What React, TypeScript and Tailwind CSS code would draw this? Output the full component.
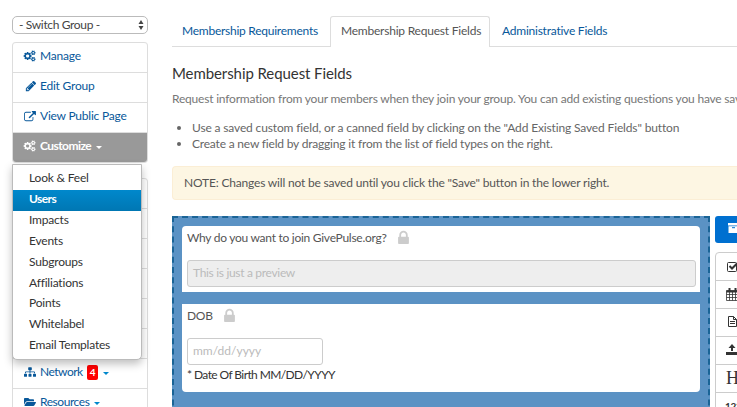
import React, { FC, ReactNode } from 'react';
import clsx from 'clsx';
import { FaSitemap, FaFolderOpen } from 'react-icons/fa';

interface IGlyph {
  name: keyof typeof glyphs;
  className?: string;
}

const glyphs = {
  cogs: {
    box: '0 0 1920 1792',
    d: 'M832 896q0-106-75-181t-181-75-181 75-75 181 75 181 181 75 181-75 75-181zm768 512q0-52-38-90t-90-38-90 38-38 90q0 53 37.5 90.5t90.5 37.5 90.5-37.5 37.5-90.5zm0-1024q0-52-38-90t-90-38-90 38-38 90q0 53 37.5 90.5t90.5 37.5 90.5-37.5 37.5-90.5zm-384 421v185q0 10-7 19.5t-16 10.5l-155 24q-11 35-32 76 34 48 90 115 7 11 7 20 0 12-7 19-23 30-82.5 89.5t-78.5 59.5q-11 0-21-7l-115-90q-37 19-77 31-11 108-23 155-7 24-30 24h-186q-11 0-20-7.5t-10-17.5l-23-153q-34-10-75-31l-118 89q-7 7-20 7-11 0-21-8-144-133-144-160 0-9 7-19 10-14 41-53t47-61q-23-44-35-82l-152-24q-10-1-17-9.5t-7-19.5v-185q0-10 7-19.5t16-10.5l155-24q11-35 32-76-34-48-90-115-7-11-7-20 0-12 7-20 22-30 82-89t79-59q11 0 21 7l115 90q34-18 77-32 11-108 23-154 7-24 30-24h186q11 0 20 7.5t10 17.5l23 153q34 10 75 31l118-89q8-7 20-7 11 0 21 8 144 133 144 160 0 8-7 19-12 16-42 54t-45 60q23 48 34 82l152 23q10 2 17 10.5t7 19.5zm640 533v140q0 16-149 31-12 27-30 52 51 113 51 138 0 4-4 7-122 71-124 71-8 0-46-47t-52-68q-20 2-30 2t-30-2q-14 21-52 68t-46 47q-2 0-124-71-4-3-4-7 0-25 51-138-18-25-30-52-149-15-149-31v-140q0-16 149-31 13-29 30-52-51-113-51-138 0-4 4-7 4-2 35-20t59-34 30-16q8 0 46 46.5t52 67.5q20-2 30-2t30 2q51-71 92-112l6-2q4 0 124 70 4 3 4 7 0 25-51 138 17 23 30 52 149 15 149 31zm0-1024v140q0 16-149 31-12 27-30 52 51 113 51 138 0 4-4 7-122 71-124 71-8 0-46-47t-52-68q-20 2-30 2t-30-2q-14 21-52 68t-46 47q-2 0-124-71-4-3-4-7 0-25 51-138-18-25-30-52-149-15-149-31v-140q0-16 149-31 13-29 30-52-51-113-51-138 0-4 4-7 4-2 35-20t59-34 30-16q8 0 46 46.5t52 67.5q20-2 30-2t30 2q51-71 92-112l6-2q4 0 124 70 4 3 4 7 0 25-51 138 17 23 30 52 149 15 149 31z',
  },
  pencil: {
    box: '0 0 1792 1792',
    d: 'M491 1536l91-91-235-235-91 91v107h128v128h107zm523-928q0-22-22-22-10 0-17 7l-542 542q-7 7-7 17 0 22 22 22 10 0 17-7l542-542q7-7 7-17zm-54-192l416 416-832 832h-416v-416zm683 96q0 53-37 90l-166 166-416-416 166-165q36-38 90-38 53 0 91 38l235 234q37 39 37 91z',
  },
  external: {
    box: '0 0 1792 1664',
    d: 'M1408 928v320q0 119-84.5 203.5t-203.5 84.5h-832q-119 0-203.5-84.5t-84.5-203.5v-832q0-119 84.5-203.5t203.5-84.5h704q14 0 23 9t9 23v64q0 14-9 23t-23 9h-704q-66 0-113 47t-47 113v832q0 66 47 113t113 47h832q66 0 113-47t47-113v-320q0-14 9-23t23-9h64q14 0 23 9t9 23zm384-864v512q0 26-19 45t-45 19-45-19l-176-176-652 652q-10 10-23 10t-23-10l-114-114q-10-10-10-23t10-23l652-652-176-176q-19-19-19-45t19-45 45-19h512q26 0 45 19t19 45z',
  },
  lock: {
    box: '0 256 1152 1280',
    d: 'M320 768h512v-192q0-106-75-181t-181-75-181 75-75 181v192zm832 96v576q0 40-28 68t-68 28h-960q-40 0-68-28t-28-68v-576q0-40 28-68t68-28h32v-192q0-184 132-316t316-132 316 132 132 316v192h32q40 0 68 28t28 68z',
  },
};

const Glyph: FC<IGlyph> = ({ name, className }) => (
  <svg viewBox={glyphs[name].box} className={clsx('shrink-0 fill-current overflow-visible', className)}>
    <path d={glyphs[name].d} />
  </svg>
);

const Caret: FC<{ className?: string }> = ({ className }) => (
  <span className={clsx('border-x-[3px] border-t-[3px] border-x-transparent border-t-current', className)} />
);

const tabs = [
  { title: 'Membership Requirements', style: 'w-[158px] pl-[10px] tracking-[-0.25px]' },
  { title: 'Membership Request Fields', style: 'w-[160px] pl-[10px] tracking-[-0.22px]', active: true },
  { title: 'Administrative Fields', style: 'pl-[12px] tracking-[-0.23px]' },
];

const menu = [
  { title: 'Look & Feel' },
  { title: 'Users', active: true },
  { title: 'Impacts' },
  { title: 'Events' },
  { title: 'Subgroups' },
  { title: 'Affiliations' },
  { title: 'Points' },
  { title: 'Whitelabel' },
  { title: 'Email Templates' },
];

const NavRow: FC<{ icon?: ReactNode; children?: ReactNode }> = ({ icon, children }) => (
  <li className="flex h-[30px] items-center border-t border-[#ddd] pb-[3px] pl-[11px] tracking-[-0.22px] first:rounded-t-[3px]">
    <span className="flex w-4 items-center">{icon}</span>
    {children}
  </li>
);

const Sidebar = () => (
  <aside className="relative ml-3 w-[136px] shrink-0 pt-4 text-[#08589a]">
    <div className="flex h-[18px] items-center justify-between rounded-[5px] border border-[#bbb] pr-[3px] pl-[6px] tracking-[-0.35px] text-[#444]">
      <span className="pb-px">- Switch Group -</span>
      <svg viewBox="0 0 6 10" className="h-[10px] w-[6px] fill-[#444]">
        <path d="M3 0L5.5 4H.5zM3 10L.5 6h5z" />
      </svg>
    </div>

    <ul className="mt-2 rounded-[4px] border-x border-b border-[#ddd]">
      <NavRow icon={<Glyph name="cogs" className="h-[12px] w-[12px]" />}>Manage</NavRow>
      <NavRow icon={<Glyph name="pencil" className="ml-px h-[12px] w-[12px]" />}>Edit Group</NavRow>
      <NavRow icon={<Glyph name="external" className="h-[11px] w-[12px]" />}>View Public Page</NavRow>
      <li className="flex h-[30px] items-center rounded-b-[3px] border-t border-[#ddd] bg-[#999] pb-[3px] pl-[11px] font-bold tracking-[-0.55px] text-white">
        <span className="flex w-4 items-center">
          <Glyph name="cogs" className="h-[12px] w-[12px]" />
        </span>
        Customize
        <Caret className="mt-[3px] ml-[5px]" />
      </li>
    </ul>

    <ul className="mt-[15px] rounded-t-[4px] border-x border-[#ddd]">
      {[1, 2, 3, 4, 5, 6].map((row) => (
        <NavRow key={row} />
      ))}
      <NavRow icon={<FaSitemap className="h-[10px] w-[12px]" />}>
        <span className="w-[42px] tracking-[-0.5px]">Network</span>
        <span className="ml-[5px] flex h-[15px] w-[11px] items-center justify-center rounded-[2px] bg-[#f00] text-[10px] font-bold text-white">4</span>
        <Caret className="mt-[3px] ml-[5px] text-[#0088cc]" />
      </NavRow>
      <NavRow icon={<FaFolderOpen className="h-[12px] w-[12px]" />}>
        <span className="tracking-[-0.45px]">Resources</span>
        <Caret className="mt-[3px] ml-[5px] text-[#0088cc]" />
      </NavRow>
    </ul>

    <ul className="absolute top-[164px] left-0 h-[196px] w-[130px] rounded-b-[5px] border border-[#bbb] bg-white pt-[4px] tracking-[-0.2px] text-[#333] shadow-[0_4px_9px_rgba(0,0,0,0.25)]">
      {menu.map((item) => (
        <li
          key={item.title}
          className={clsx(
            'flex h-[20.85px] items-center pb-[2px] pl-4',
            item.active && 'bg-gradient-to-b from-[#0088cc] to-[#0077b3] font-bold tracking-[-0.6px] text-white'
          )}
        >
          {item.title}
        </li>
      ))}
    </ul>
  </aside>
);

const Field: FC<{ label: string; className?: string; children: ReactNode }> = ({ label, className, children }) => (
  <div className={clsx('bg-white pl-[5px] text-[#555]', className)}>
    <div className="flex h-[23px] items-center tracking-[-0.27px]">
      <span>{label}</span>
      <Glyph name="lock" className="ml-[11px] h-[12px] w-[11px] text-[#ccc]" />
    </div>
    {children}
  </div>
);

const Palette = () => (
  <div className="ml-[5px] w-[60px] shrink-0 text-[#333]">
    <div className="flex h-[27px] items-center rounded-[3px] bg-[#0070d0] pb-[3px] pl-[13px]">
      <svg viewBox="0 0 14 11" className="h-[11px] w-[14px]">
        <path d="M0 0H14V2.500H0zM.5 3.200H13.500V10H.5z" fill="#fff" />
        <path d="M4 4.700H7" stroke="#0070d0" />
      </svg>
    </div>
    <div className="mt-[9px] rounded-[4px] border border-[#ccc]">
      <div className="flex h-[27px] items-center pl-[11px]">
        <svg viewBox="0 0 11 11" className="size-[11px]" fill="none" stroke="currentColor">
          <rect x=".5" y="1.500" width="9" height="9" rx="1" />
          <path d="M2.500 5L5 7.500L10 2.500" strokeWidth="2" />
        </svg>
      </div>
      <div className="flex h-7 items-center border-t border-[#ccc] pb-px pl-[10px]">
        <svg viewBox="0 0 13 13" className="size-[13px]" fill="none" stroke="currentColor">
          <path d="M.5 2.500H12.500V12.500H.5zM.5 6.500H12.500M.5 9.500H12.500M3.500 4V12.500M6.500 4V12.500M9.500 4V12.500" strokeWidth=".8" />
          <path d="M.5 3.500H12.500" strokeWidth="2" />
          <path d="M3.500 0V3M9.500 0V3" strokeWidth="2" />
        </svg>
      </div>
      <div className="flex h-7 items-center border-t border-[#ccc] pb-[2px] pl-[12px]">
        <svg viewBox="0 0 9 11" className="h-[11px] w-[9px]" fill="none" stroke="currentColor">
          <path d="M.5 .5H5.500L8.500 3.500V10.500H.5zM5.500 .5V3.500H8.500M2 5.500H7M2 7.500H7" />
        </svg>
      </div>
      <div className="flex h-7 items-center border-t border-[#ccc] pb-px pl-[10px]">
        <svg viewBox="0 0 12 12" className="size-3 fill-current">
          <path d="M6 0L9.500 4H7V7H5V4H2.500zM0 8H12V11H0z" />
        </svg>
      </div>
      <div className="flex h-7 items-center border-t border-[#ccc] pb-[2px] pl-[10px] font-['Liberation_Serif',serif] text-[18px]">H</div>
      <div className="flex h-7 items-center border-t border-[#ccc] pb-[2px] pl-[9px] text-[10px] font-bold tracking-[-0.3px]">123</div>
    </div>
  </div>
);

const App: FC = () => (
  <div className="flex h-[407px] w-[737px] overflow-hidden bg-white font-[Lato,sans-serif] text-[12px] leading-[16px] whitespace-nowrap">
    <Sidebar />

    <main className="ml-6 w-[565px] shrink-0 pt-4">
      <nav className="flex h-[31px] border-b border-[#ddd] text-[#08589a]">
        {tabs.map((tab) => (
          <div
            key={tab.title}
            className={clsx(
              'flex items-center',
              tab.style,
              tab.active ? 'h-[31px] rounded-t-[3px] border border-b-0 border-[#ddd] bg-white pb-[3px] text-[#555]' : 'h-[30px] pb-px'
            )}
          >
            {tab.title}
          </div>
        ))}
      </nav>

      <h1 className="mt-[16px] text-[15px] leading-5 tracking-[-0.08px] text-[#333]">Membership Request Fields</h1>
      <p className="mt-[8px] tracking-[-0.2px] text-[#777]">Request information from your members when they join your group. You can add existing questions you have sav</p>
      <ul className="mt-[13px] list-disc pl-5 text-[#666]">
        <li className="tracking-[-0.145px]">Use a saved custom field, or a canned field by clicking on the "Add Existing Saved Fields" button</li>
        <li className="tracking-[-0.19px]">Create a new field by dragging it from the list of field types on the right.</li>
      </ul>

      <div className="mt-[14px] flex h-[34px] items-center rounded-l-[4px] border border-r-0 border-[#fbeed5] bg-[#fdf6e3] pb-px pl-[11px] tracking-[-0.18px] text-[#555]">
        NOTE: Changes will not be saved until you click the "Save" button in the lower right.
      </div>

      <div className="mt-4 flex">
        <div className="h-[220px] w-[538px] shrink-0 border-2 border-dashed border-[#1a6496] bg-[#5b92c4] p-2">
          <Field label="Why do you want to join GivePulse.org?" className="h-[66px] rounded-t-[4px]">
            <div className="mt-[11px] flex h-[27px] w-[509px] items-center rounded-[3px] border border-[#ccc] bg-[#eee] pb-px pl-[5px] tracking-[-0.32px] text-[#bbb]">
              This is just a preview
            </div>
          </Field>
          <Field label="DOB" className="mt-3 h-[88px] rounded-b-[4px]">
            <div className="mt-[11px] flex h-[27px] w-[136px] items-center rounded-[3px] border border-[#ccc] pb-px pl-[5px] text-[#bbb]">mm/dd/yyyy</div>
            <p className="mt-[2px] tracking-[-0.6px] text-[#333]">* Date Of Birth MM/DD/YYYY</p>
          </Field>
        </div>
        <Palette />
      </div>
    </main>
  </div>
);

export default App;
